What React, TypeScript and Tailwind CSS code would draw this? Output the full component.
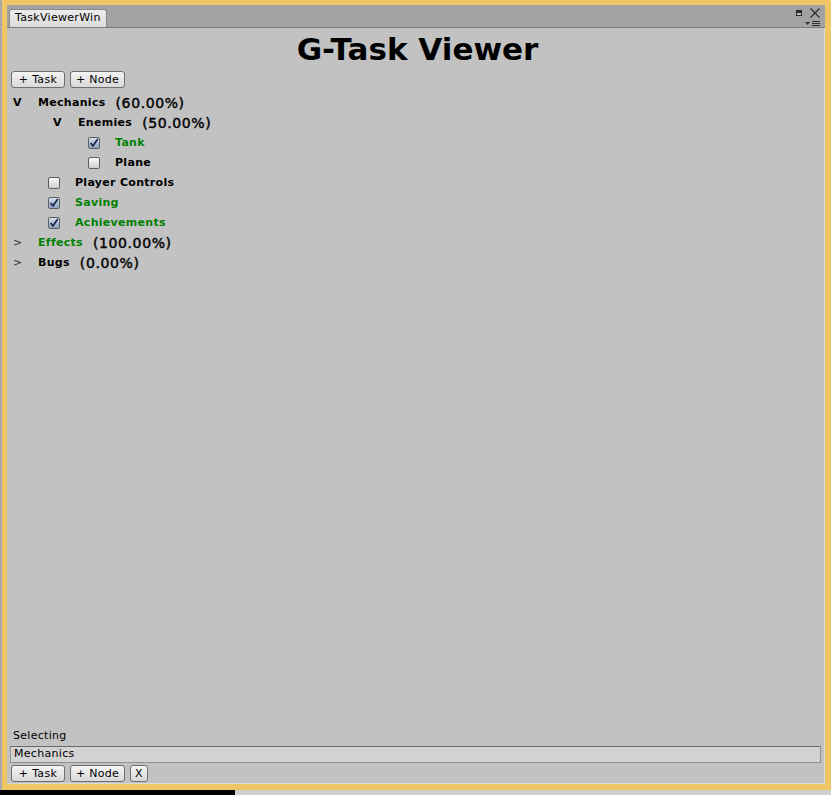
import React from "react";

type Node = {
  label: string;
  depth: number;
  kind: "folder" | "task";
  open?: boolean;
  done?: boolean;
  pct?: string;
  green?: boolean;
};

const rows: Node[] = [
  { label: "Mechanics", depth: 0, kind: "folder", open: true, pct: "(60.00%)" },
  { label: "Enemies", depth: 1, kind: "folder", open: true, pct: "(50.00%)" },
  { label: "Tank", depth: 2, kind: "task", done: true, green: true },
  { label: "Plane", depth: 2, kind: "task", done: false },
  { label: "Player Controls", depth: 1, kind: "task", done: false },
  { label: "Saving", depth: 1, kind: "task", done: true, green: true },
  { label: "Achievements", depth: 1, kind: "task", done: true, green: true },
  { label: "Effects", depth: 0, kind: "folder", open: false, pct: "(100.00%)", green: true },
  { label: "Bugs", depth: 0, kind: "folder", open: false, pct: "(0.00%)" },
];

const font = "font-['DejaVu_Sans',sans-serif]";

const Btn: React.FC<{ children: React.ReactNode; w: string }> = ({ children, w }) => (
  <div
    className={`${w} h-[17px] flex items-center justify-center rounded-[3px] border border-[#6f6f6f] bg-gradient-to-b from-[#f4f4f4] to-[#d9d9d9] text-[11px] tracking-[0.3px] text-black leading-none`}
  >
    {children}
  </div>
);

const Check: React.FC<{ on?: boolean }> = ({ on }) => (
  <div
    className={`w-[12px] h-[12px] rounded-[2px] border border-[#5e5e5e] flex items-center justify-center ${
      on ? "bg-gradient-to-b from-[#d6e0f0] to-[#8ea3c6]" : "bg-gradient-to-b from-[#fafafa] to-[#cfcfcf]"
    }`}
  >
    {on && (
      <svg width="10" height="10" viewBox="0 0 10 10">
        <path d="M1.5 5 L4 7.8 L8.8 1" fill="none" stroke="#1c2a48" strokeWidth="1.8" />
      </svg>
    )}
  </div>
);

const Row: React.FC<{ n: Node }> = ({ n }) => {
  const color = n.green ? "text-[#008000]" : "text-black";
  if (n.kind === "folder") {
    return (
      <div className="h-[20px] flex items-center" style={{ paddingLeft: 6 + n.depth * 40 }}>
        <span className={`w-[25px] text-[11px] ${n.open ? "font-bold text-black" : "text-[#303030]"}`}>
          {n.open ? "V" : ">"}
        </span>
        <span className={`text-[11px] font-bold tracking-[0.3px] ${color}`}>{n.label}</span>
        <span className="ml-[10px] text-[14px] font-medium text-black tracking-[0.6px] [-webkit-text-stroke:0.4px_black]">
          {n.pct}
        </span>
      </div>
    );
  }
  return (
    <div className="h-[20px] flex items-center" style={{ paddingLeft: n.depth * 40 + 1 }}>
      <Check on={n.done} />
      <span className={`ml-[15px] text-[11px] font-bold tracking-[0.3px] ${color}`}>{n.label}</span>
    </div>
  );
};

export default function App() {
  return (
    <div className={`w-[831px] h-[795px] flex flex-col bg-[#f0c566] ${font}`}>
      <div className="flex flex-1 min-h-0">
        <div className="w-[2px] bg-[#a9a9a9]" />
        <div className="flex-1 flex flex-col pt-[5px] pl-[5px] pr-[6px] pb-[6px]">
          {/* tab strip */}
          <div className="h-[23px] flex items-end justify-between bg-[#a2a2a2] border-b border-[#7c7c7c] pl-[2px]">
            <div className="h-[18px] px-[5px] flex items-center rounded-t-[3px] border border-b-0 border-[#8a8a8a] bg-gradient-to-b from-[#ececec] to-[#dcdcdc] text-[11px] tracking-[0.3px] text-black">
              TaskViewerWin
            </div>
            <div className="flex flex-col items-end pr-[5px] pb-[1px] gap-[3px]">
              <div className="flex items-start gap-[8px]">
                <div className="w-[6px] h-[6px] mt-[2px] bg-[#2b2b2b] flex items-end justify-center pb-[1px]">
                  <div className="w-[4px] h-[2px] bg-[#b9b9b9]" />
                </div>
                <svg width="10" height="10" viewBox="0 0 10 10">
                  <path d="M0.5 0.5 L9.5 9.5 M9.5 0.5 L0.5 9.5" stroke="#2a2a2a" strokeWidth="1.1" />
                </svg>
              </div>
              <div className="flex items-center gap-[2px]">
                <svg width="5" height="4" viewBox="0 0 5 4">
                  <path d="M0 0 H5 L2.5 3 Z" fill="#333" />
                </svg>
                <div className="flex flex-col gap-[1px]">
                  <div className="w-[8px] h-[1px] bg-[#333]" />
                  <div className="w-[8px] h-[1px] bg-[#333]" />
                  <div className="w-[8px] h-[1px] bg-[#333]" />
                </div>
              </div>
            </div>
          </div>

          {/* content */}
          <div className="flex-1 flex flex-col bg-[#c2c2c2] border-r border-b border-[#dadada]">
            <div className="h-[43px] pl-[4px] flex items-center justify-center text-[31px] font-bold text-black leading-none">
              G-Task Viewer
            </div>
            <div className="flex gap-[5px] pl-[4px]">
              <Btn w="w-[54px]">+ Task</Btn>
              <Btn w="w-[55px]">+ Node</Btn>
            </div>
            <div className="mt-[5px] flex flex-col">
              {rows.map((n) => (
                <Row key={n.label} n={n} />
              ))}
            </div>
            <div className="flex-1" />
            <div className="pl-[6px] text-[11px] tracking-[0.3px] text-black h-[16px] flex items-center">Selecting</div>
            <div className="mx-[3px] mt-[2px] h-[17px] flex items-center pl-[3px] bg-[#d3d3d3] border border-[#909090] border-t-[#6a6a6a] text-[11px] tracking-[0.3px] text-black">
              Mechanics
            </div>
            <div className="flex gap-[5px] pl-[4px] mt-[2px] mb-[1px]">
              <Btn w="w-[54px]">+ Task</Btn>
              <Btn w="w-[55px]">+ Node</Btn>
              <Btn w="w-[18px]">X</Btn>
            </div>
          </div>
        </div>
      </div>
      <div className="h-[5px] flex">
        <div className="w-[235px] bg-black" />
        <div className="flex-1 bg-[#cfcfcf]" />
      </div>
    </div>
  );
}
